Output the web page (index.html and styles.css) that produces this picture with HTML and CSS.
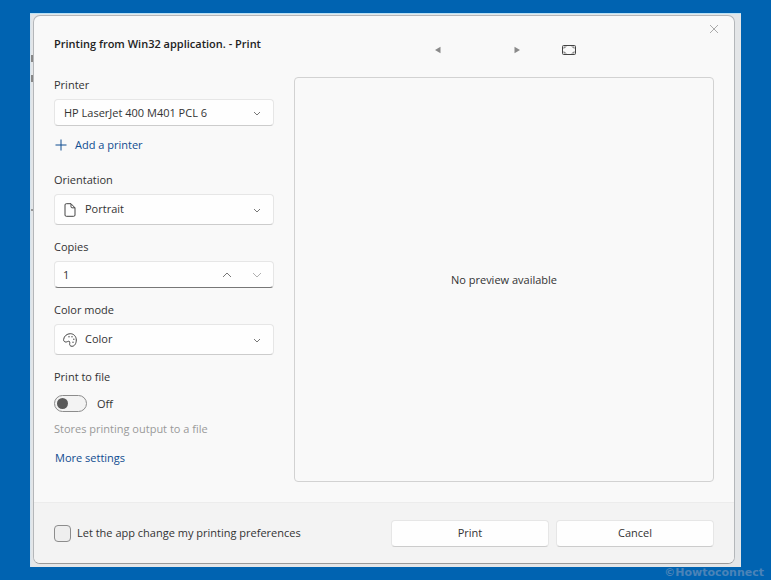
FILE: index.html
```html
<!DOCTYPE html>
<html lang="en">
<head>
<meta charset="UTF-8">
<meta name="viewport" content="width=device-width, initial-scale=1.0">
<title>Print</title>
<link rel="stylesheet" href="styles.css">
</head>
<body>
<div class="window">
    <form class="dialog" onsubmit="return false">
        <button type="button" class="icon-button close" aria-label="Close">
            <svg width="10" height="10" viewBox="0 0 10 10"><path d="M1 1l8 8M9 1l-8 8"/></svg>
        </button>

        <div class="content">
            <!-- Settings -->
            <div class="settings">
                <h1>Printing from Win32 application. - Print</h1>

                <div class="field">
                    <label for="printer">Printer</label>
                    <div class="control">
                        <select id="printer"><option>HP LaserJet 400 M401 PCL 6</option></select>
                        <svg class="chevron" width="8" height="5" viewBox="0 0 8 5"><path d="M1 1l3 3 3-3"/></svg>
                    </div>
                </div>
                <a href="#" class="add-printer">
                    <svg width="12" height="12" viewBox="0 0 12 12"><path d="M6 .5v11M.5 6h11"/></svg>
                    Add a printer
                </a>

                <div class="field">
                    <label for="orientation">Orientation</label>
                    <div class="control tall">
                        <svg class="lead" width="14" height="14" viewBox="0 0 14 14"><path d="M2 2q0-1.300 1.300-1.300H8L12 4.800V12q0 1.300-1.300 1.300H3.300Q2 13.300 2 12zM8 .8V3.700q0 1.100 1.100 1.100H12"/></svg>
                        <select id="orientation"><option>Portrait</option><option>Landscape</option></select>
                        <svg class="chevron" width="8" height="5" viewBox="0 0 8 5"><path d="M1 1l3 3 3-3"/></svg>
                    </div>
                </div>

                <div class="field">
                    <label for="copies">Copies</label>
                    <div class="stepper">
                        <input type="number" id="copies" value="1" min="1">
                        <button type="button" class="icon-button" aria-label="More copies" onclick="copies.stepUp()">
                            <svg width="10" height="6" viewBox="0 0 10 6"><path d="M1 5l4-4 4 4"/></svg>
                        </button>
                        <button type="button" class="icon-button faded" aria-label="Fewer copies" onclick="copies.stepDown()">
                            <svg width="10" height="6" viewBox="0 0 10 6"><path d="M1 1l4 4 4-4"/></svg>
                        </button>
                    </div>
                </div>

                <div class="field">
                    <label for="color">Color mode</label>
                    <div class="control tall">
                        <svg class="lead" width="14" height="14" viewBox="0 0 14 14">
                            <path d="M.6 6.500C1 3 4 .7 7.300.7c3.500 0 6 2.800 6 6.300 0 3.400-1.700 6.300-4.300 6.300-1.900 0-2.600-1.200-2.300-2.800.3-1.800-.3-2.600-1.400-2.200-1.200.4-2 1-3.200.6C.9 8.500.5 7.600.6 6.500z"/>
                            <circle class="dot" cx="6" cy="3.800" r=".8"/><circle class="dot" cx="9" cy="3.800" r=".8"/><circle class="dot" cx="10.800" cy="6.200" r=".8"/><circle class="dot" cx="10" cy="9.200" r=".8"/>
                        </svg>
                        <select id="color"><option>Color</option><option>Monochrome</option></select>
                        <svg class="chevron" width="8" height="5" viewBox="0 0 8 5"><path d="M1 1l3 3 3-3"/></svg>
                    </div>
                </div>

                <div class="field">
                    <label for="tofile">Print to file</label>
                    <div class="toggle">
                        <input type="checkbox" id="tofile" class="switch">
                        <span>Off</span>
                    </div>
                </div>
                <p class="hint">Stores printing output to a file</p>
                <a href="#" class="more">More settings</a>
            </div>

            <!-- Preview -->
            <div class="preview">
                <div class="toolbar">
                    <button type="button" class="icon-button prev" aria-label="Previous page">
                        <svg width="8" height="8" viewBox="0 0 8 8"><path class="solid" d="M6.500.8v6.400L1 4z"/></svg>
                    </button>
                    <button type="button" class="icon-button next" aria-label="Next page">
                        <svg width="8" height="8" viewBox="0 0 8 8"><path class="solid" d="M1.500.8v6.400L7 4z"/></svg>
                    </button>
                    <button type="button" class="icon-button fit" aria-label="Fit to page">
                        <svg width="14" height="12" viewBox="0 0 14 12"><rect x=".5" y="1.500" width="13" height="9" rx="1"/><path class="solid" d="M1.500 2.500h3.500L1.500 5zM12.500 2.500H9l3.500 2.500zM1.500 9.500h3.500L1.500 7zM12.500 9.500H9L12.500 7z"/></svg>
                    </button>
                </div>
                <div class="page">No preview available</div>
            </div>
        </div>

        <!-- Footer -->
        <div class="footer">
            <label class="prefs"><input type="checkbox"> Let the app change my printing preferences</label>
            <button class="action">Print</button>
            <button type="button" class="action">Cancel</button>
        </div>
    </form>
</div>
<div class="watermark">©Howtoconnect</div>

<script>
const copies = document.getElementById('copies');
</script>
</body>
</html>
```
FILE: styles.css
```css
* {
    box-sizing: border-box;
}
body {
    display: flex;
    min-height: 100vh;
    margin: 0;
    padding: 13px 30px;
    position: relative;
    background-color: #0063b1;
    color: #333;
    font: 11px/16px "Open Sans", "Noto Sans", sans-serif;
}
/* app window behind the dialog, only its edges are visible */
.window {
    flex: 1;
    display: flex;
    padding: 1px 6px 3px 3px;
    border-top: 1px solid #b9e2f7;
    background:
        linear-gradient(#888, #888) 1px 41px / 2px 7px no-repeat,
        linear-gradient(#888, #888) 1px 61px / 2px 7px no-repeat,
        linear-gradient(#999, #999) 1px 195px / 2px 2px no-repeat,
        linear-gradient(to right, #d5e4ef, #e4e6e8 2px);
}
.dialog {
    flex: 1;
    display: flex;
    flex-direction: column;
    position: relative;
    border: 1px solid #b4b7ba;
    border-bottom-color: #999;
    border-radius: 7px;
    background-color: #f9f9f9;
    overflow: hidden;
}
.content {
    flex: 1;
    display: grid;
    grid-template-columns: 220px 1fr;
    gap: 20px;
    padding: 20px;
}
h1 {
    margin: 0 0 25px;
    font-size: 11px;
    line-height: 16px;
    font-weight: 600;
    color: #222;
    white-space: nowrap;
}
svg {
    display: block;
    fill: none;
    stroke: currentColor;
}
a {
    color: #0f4c90;
    text-decoration: none;
}
a:hover {
    text-decoration: underline;
}
.settings {
    display: flex;
    flex-direction: column;
    align-items: stretch;
}
.field {
    margin-bottom: 14px;
}
.field > label {
    display: block;
    margin-bottom: 6px;
}
.control {
    position: relative;
    height: 27px;
}
.control.tall {
    height: 31px;
}
select,
.stepper {
    width: 100%;
    height: 100%;
    border: 1px solid #e6e6e6;
    border-bottom-color: #ccc;
    border-radius: 4px;
    background-color: #fefefe;
}
select {
    appearance: none;
    padding: 0 24px 0 9px;
    font: inherit;
    color: inherit;
}
.tall select {
    padding: 0 24px 2px 30px;
}
.lead {
    position: absolute;
    left: 9px;
    top: 9px;
    color: #444;
}
.dot {
    fill: #666;
    stroke: none;
}
.chevron {
    position: absolute;
    right: 13px;
    top: 50%;
    margin-top: -2px;
    color: #777;
    pointer-events: none;
}
.add-printer {
    display: flex;
    align-items: center;
    gap: 8px;
    margin: -3px 0 19px 1px;
}
.stepper {
    display: flex;
    align-items: center;
    height: 27px;
    border-bottom-color: #777;
}
.stepper input {
    flex: 1;
    min-width: 0;
    padding: 0 8px;
    border: none;
    background: none;
    font: inherit;
    color: inherit;
    appearance: textfield;
}
.stepper input::-webkit-inner-spin-button {
    appearance: none;
}
.stepper .icon-button {
    width: 30px;
}
.stepper .icon-button:last-child {
    margin-right: 1px;
}
.icon-button {
    display: flex;
    align-items: center;
    justify-content: center;
    width: 24px;
    height: 24px;
    padding: 0;
    border: none;
    background: none;
    color: #777;
    cursor: pointer;
}
.icon-button.faded {
    color: #b0b0b0;
}
.toggle {
    display: flex;
    align-items: center;
    gap: 10px;
    height: 17px;
    margin-top: 10px;
}
.switch {
    appearance: none;
    display: flex;
    align-items: center;
    width: 33px;
    height: 17px;
    margin: 0;
    padding: 0 2px;
    border: 1px solid #8c8c8c;
    border-radius: 9px;
    background-color: #f3f3f3;
}
.switch::before {
    content: "";
    width: 11px;
    height: 11px;
    border-radius: 50%;
    background-color: #5a5a5a;
}
.switch:checked {
    justify-content: flex-end;
}
.hint {
    margin: -5px 0 13px;
    color: #999;
}
.more {
    align-self: flex-start;
    margin-left: 1px;
}
.preview {
    display: flex;
    flex-direction: column;
}
.toolbar {
    display: flex;
    align-items: center;
    height: 27px;
    margin-bottom: 14px;
    padding-left: 132px;
}
.next {
    margin: 0 28px 0 55px;
}
.fit {
    color: #444;
}
.solid {
    fill: #8a8a8a;
    stroke: none;
}
.page {
    flex: 1;
    display: flex;
    align-items: center;
    justify-content: center;
    border: 1px solid #d2d2d2;
    border-radius: 4px;
}
.close {
    position: absolute;
    top: 1px;
    right: 8px;
    color: #aaa;
}
.footer {
    display: flex;
    align-items: center;
    gap: 7px;
    height: 61px;
    padding: 0 20px;
    border-top: 1px solid #ececec;
    background-color: #f3f3f3;
}
.prefs {
    flex: 1;
    display: flex;
    align-items: center;
    gap: 6px;
    white-space: nowrap;
}
.prefs input {
    appearance: none;
    width: 17px;
    height: 17px;
    margin: 0;
    border: 1px solid #8c8c8c;
    border-radius: 4px;
    background-color: #eee;
}
.prefs input:checked {
    background-color: #0063b1;
}
.action {
    width: 158px;
    height: 27px;
    border: 1px solid #e6e6e6;
    border-bottom-color: #ccc;
    border-radius: 4px;
    background-color: #fefefe;
    font: inherit;
    color: inherit;
    cursor: pointer;
}
.watermark {
    position: absolute;
    right: 7px;
    bottom: -1px;
    color: #4b83b8;
    font: bold 11px/16px "DejaVu Sans", sans-serif;
}
```
